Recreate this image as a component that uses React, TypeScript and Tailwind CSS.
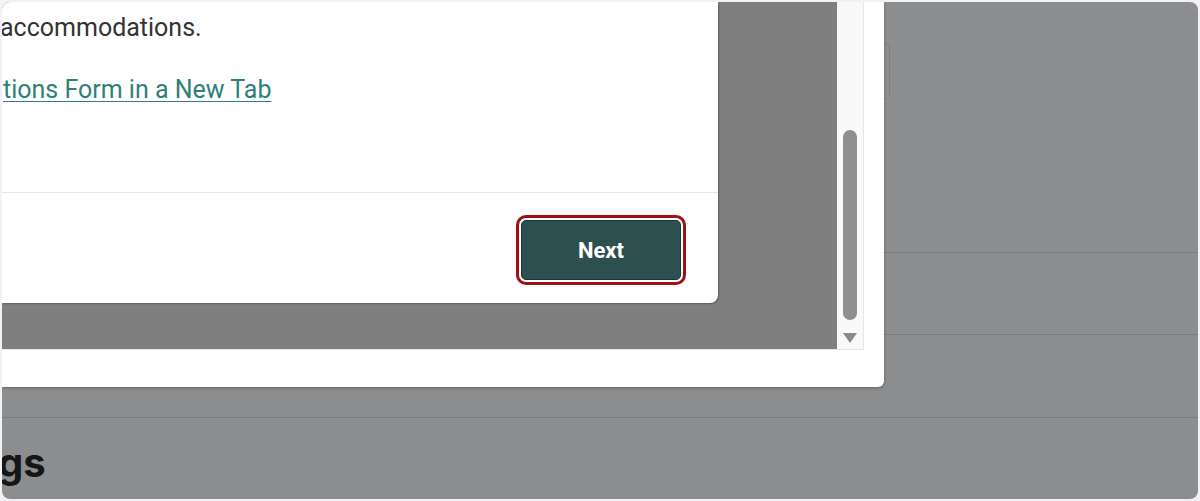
import React from 'react';

export default function App() {
    return (
        <div className="w-[1200px] h-[501px] bg-[#f2f2f5] p-[2px]" style={{ fontFamily: 'Roboto, "Liberation Sans", sans-serif' }}>
            <div className="relative h-full rounded-[8px] overflow-hidden bg-[#8c8d8f]">

                {/* Page behind the dialog */}
                <div className="flex flex-col">
                    <div className="h-[251px] border-b border-[#7a7b7d] pt-[41px]">
                        <div className="ml-[780px] w-[108px] h-[57px] rounded-[6px] border border-[#7e7f82]" />
                    </div>
                    <div className="h-[82px] border-b border-[#7a7b7d]" />
                    <div className="h-[83px] border-b border-[#7a7b7d]" />
                    <div className="pt-[22px]">
                        <h2
                            className="-ml-[4px] text-[40px] leading-[46px] font-bold text-[#161616]"
                            style={{ fontFamily: 'Inter, Lato, sans-serif' }}
                        >
                            gs
                        </h2>
                    </div>
                </div>

                {/* Dialog */}
                <div className="absolute left-0 top-0 w-[882px] h-[385px] bg-white rounded-br-[6px] shadow-[0_1px_3px_rgba(0,0,0,0.3)]">
                    <div className="flex w-[862px] border-r border-b border-[#e6e6e6]">
                        <div className="w-[835px] h-[347px] bg-[#7f7f7f]">
                            <div className="w-[716px] h-[301px] bg-white rounded-br-[8px] shadow-[1px_1px_2px_rgba(0,0,0,0.25)] flex flex-col">
                                <div className="h-[191px] pt-[7px] border-b border-[#e5e7eb]">
                                    <p className="-ml-[2px] text-[25px] leading-[38px] text-[#333333] whitespace-nowrap">
                                        accommodations.
                                    </p>
                                    <p className="mt-[24px] ml-[1px] text-[25px] leading-[38px] whitespace-nowrap">
                                        <a href="#" className="text-[#2f7f79] underline underline-offset-[3px] decoration-1">
                                            tions Form in a New Tab
                                        </a>
                                    </p>
                                </div>
                                <div className="flex-1 flex items-center justify-end pr-[32px] pt-[4px]">
                                    <div className="border-[3px] border-[#a30f0f] rounded-[10px] p-[2px]">
                                        <button className="w-[160px] h-[60px] rounded-[5px] bg-[#2d4f4f] border border-[#0f3a3a] text-white text-[22px] font-bold">
                                            Next
                                        </button>
                                    </div>
                                </div>
                            </div>
                        </div>
                        <div className="w-[26px] h-[347px] bg-[#f9f9f9] flex flex-col items-center pt-[128px]">
                            <div className="w-[14px] h-[190px] rounded-full bg-[#8f8f8f]" />
                            <svg width="14" height="10" viewBox="0 0 14 10" className="mt-[13px]">
                                <path d="M0 0 H14 L7 10 Z" fill="#8a8a8a" />
                            </svg>
                        </div>
                    </div>
                </div>

            </div>
        </div>
    );
}
